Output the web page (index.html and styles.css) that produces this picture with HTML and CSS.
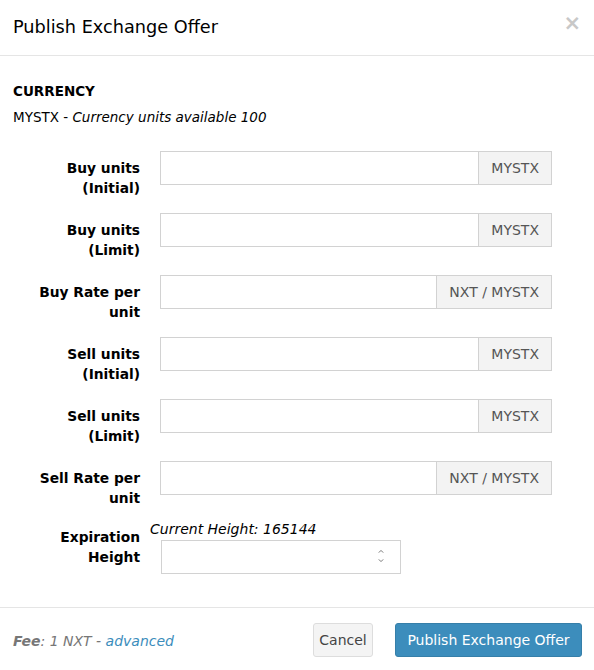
FILE: index.html
```html
<!DOCTYPE html>
<html>
<head>
<meta charset="utf-8">
<link rel="stylesheet" href="styles.css">
</head>
<body>
<div class="modal">
  <div class="modal-header">
    <h4 class="modal-title">Publish Exchange Offer</h4>
    <span class="close">&times;</span>
  </div>
  <div class="modal-body">
    <div class="currency">
      <div class="currency-label">CURRENCY</div>
      <div class="currency-info">MYSTX - <em>Currency units available 100</em></div>
    </div>
    <div class="form">
      <div class="row">
        <label class="control-label">Buy units (Initial)</label>
        <div class="input-group"><input class="form-control" type="text"><span class="addon">MYSTX</span></div>
      </div>
      <div class="row">
        <label class="control-label">Buy units (Limit)</label>
        <div class="input-group"><input class="form-control" type="text"><span class="addon">MYSTX</span></div>
      </div>
      <div class="row">
        <label class="control-label">Buy Rate per unit</label>
        <div class="input-group"><input class="form-control" type="text"><span class="addon">NXT / MYSTX</span></div>
      </div>
      <div class="row">
        <label class="control-label">Sell units (Initial)</label>
        <div class="input-group"><input class="form-control" type="text"><span class="addon">MYSTX</span></div>
      </div>
      <div class="row">
        <label class="control-label">Sell units (Limit)</label>
        <div class="input-group"><input class="form-control" type="text"><span class="addon">MYSTX</span></div>
      </div>
      <div class="row">
        <label class="control-label">Sell Rate per unit</label>
        <div class="input-group"><input class="form-control" type="text"><span class="addon">NXT / MYSTX</span></div>
      </div>
      <div class="row row-exp">
        <label class="control-label exp-label">Expiration Height</label>
        <div class="exp-col">
          <div class="current-height">Current Height: 165144</div>
          <div class="number-wrap">
            <input class="form-control number" type="text">
            <svg class="spin" width="8" height="16" viewBox="0 0 8 16"><path d="M1.8 4.6 L4 2.4 L6.2 4.6" fill="none" stroke="#777" stroke-width="1"/><path d="M1.8 11.4 L4 13.6 L6.2 11.4" fill="none" stroke="#777" stroke-width="1"/></svg>
          </div>
        </div>
      </div>
    </div>
  </div>
  <div class="modal-footer">
    <div class="fee"><b>Fee</b>: 1 NXT - <a class="adv">advanced</a></div>
    <div class="buttons">
      <button class="btn btn-default">Cancel</button>
      <button class="btn btn-primary">Publish Exchange Offer</button>
    </div>
  </div>
</div>
</body>
</html>
```
FILE: styles.css
```css
html, body {
  margin: 0;
  padding: 0;
  background: #fff;
}
body {
  font-family: "DejaVu Sans", Verdana, sans-serif;
  font-size: 13.5px;
  line-height: 20px;
  color: #000;
}
.modal {
  width: 594px;
}
.modal-header {
  height: 55px;
  border-bottom: 1px solid #e5e5e5;
  display: flex;
  align-items: center;
  justify-content: space-between;
  padding: 0 13px 0 13px;
}
.modal-title {
  margin: 0;
  font-size: 17.7px;
  font-weight: normal;
  line-height: 26px;
  margin-top: -2px;
}
.close {
  font-size: 21px;
  font-weight: bold;
  color: #c8c8c8;
  line-height: 20px;
  margin-top: -10px;
}
.modal-body {
  padding: 25px 0 33px 0;
}
.currency {
  padding: 0 13px;
  margin-bottom: 24px;
}
.currency-label {
  font-weight: bold;
  line-height: 20px;
  margin-bottom: 6px;
}
.currency-info em {
  font-style: italic;
}
.form {
  display: flex;
  flex-direction: column;
  gap: 15px;
  padding-left: 22px;
}
.row {
  display: grid;
  grid-template-columns: 118px 392px;
  column-gap: 20px;
  align-items: start;
}
.control-label {
  font-weight: bold;
  font-size: 13.8px;
  text-align: right;
  padding-top: 7px;
  line-height: 20px;
}
.input-group {
  display: flex;
  height: 34px;
}
.form-control {
  flex: 1;
  min-width: 0;
  height: 34px;
  box-sizing: border-box;
  border: 1px solid #d2d2d2;
  border-radius: 0;
  margin: 0;
  padding: 6px 12px;
  font: inherit;
  outline: none;
  background: #fff;
}
.addon {
  box-sizing: border-box;
  height: 34px;
  border: 1px solid #d2d2d2;
  border-left: none;
  background: #f3f3f3;
  color: #555;
  font-size: 14px;
  padding: 0 12px;
  display: flex;
  align-items: center;
  white-space: nowrap;
}
.row-exp {
  margin-top: -4px;
}
.exp-label {
  padding-top: 8px;
}
.exp-col {
  margin-left: -10px;
}
.current-height {
  font-style: italic;
  font-size: 14px;
  line-height: 20px;
}
.number-wrap {
  position: relative;
  width: 240px;
  margin-left: 11px;
  margin-top: 1px;
  display: flex;
}
.number {
  width: 240px;
}
.spin {
  position: absolute;
  right: 16px;
  top: 8px;
}
.modal-footer {
  border-top: 1px solid #e5e5e5;
  padding: 15px 12px 15px 13px;
  display: flex;
  align-items: center;
  justify-content: space-between;
}
.fee {
  color: #777;
  font-style: italic;
  font-size: 14px;
  margin-top: 1px;
}
.fee b {
  color: #777;
}
.adv {
  color: #3c8dbc;
}
.buttons {
  display: flex;
  gap: 22px;
}
.btn {
  height: 34px;
  box-sizing: border-box;
  font: inherit;
  font-size: 14px;
  padding: 0;
  border-radius: 3px;
  border: 1px solid;
}
.btn-default {
  background: #f4f4f4;
  border-color: #ddd;
  color: #444;
  width: 60px;
}
.btn-primary {
  background: #3c8dbc;
  border-color: #367fa9;
  color: #fff;
  width: 187px;
}
```
